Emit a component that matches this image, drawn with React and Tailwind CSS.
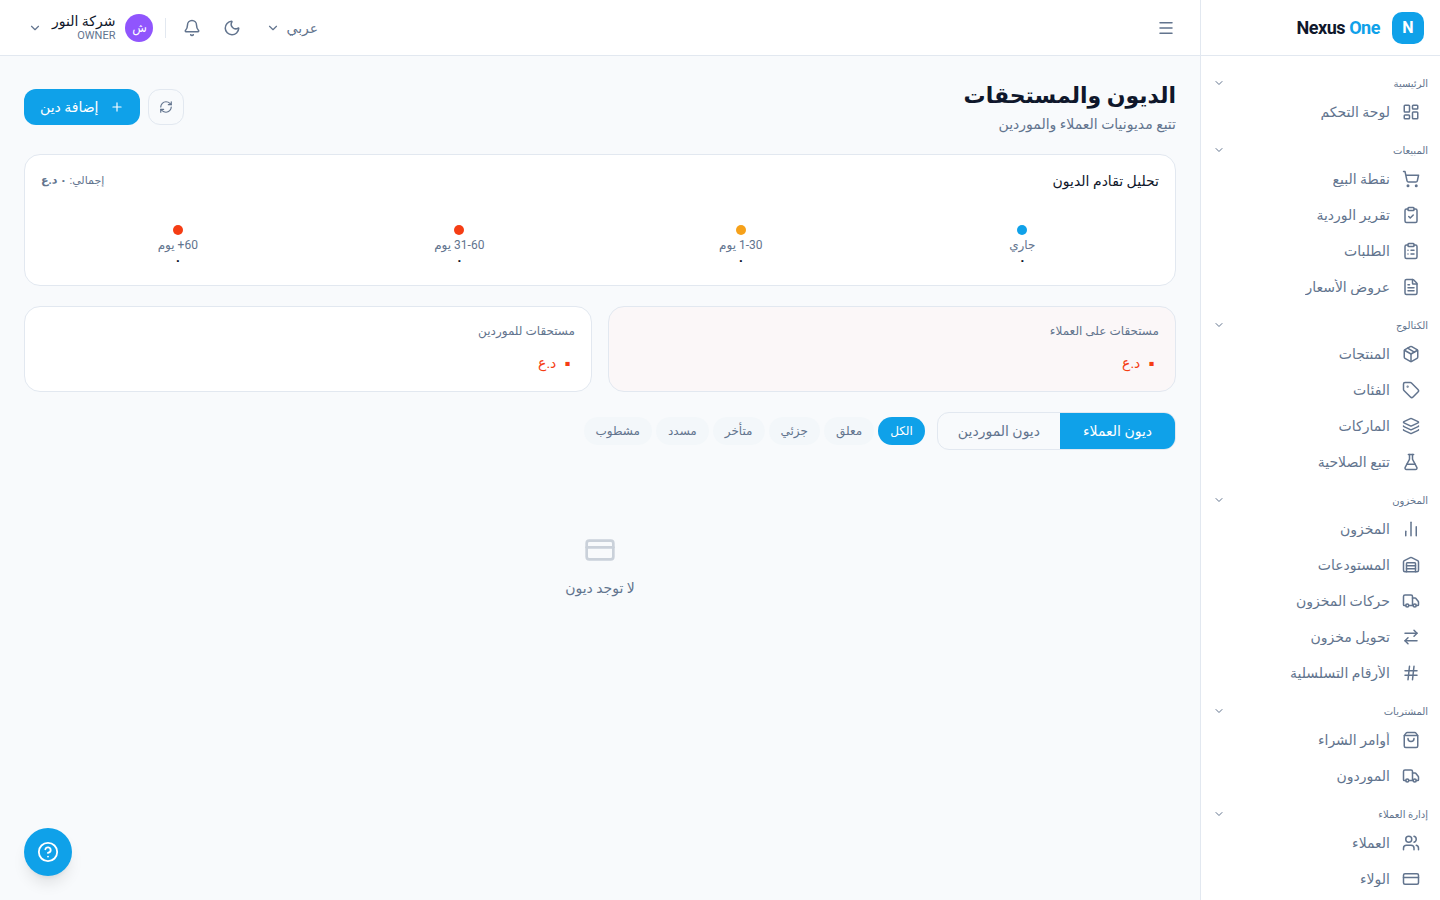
import {
  ArrowRightLeft,
  Bell,
  ChartNoAxesColumn,
  ChevronDown,
  CircleHelp,
  ClipboardCheck,
  ClipboardList,
  CreditCard,
  FileText,
  FlaskConical,
  Hash,
  Layers,
  LayoutDashboard,
  Menu,
  Moon,
  Package,
  Plus,
  RefreshCw,
  ShoppingBag,
  ShoppingCart,
  Tag,
  Truck,
  Users,
  Warehouse,
} from 'lucide-react'
import { useState } from 'react'

const SECTIONS = [
  { title: 'الرئيسية', items: [{ label: 'لوحة التحكم', icon: LayoutDashboard }] },
  {
    title: 'المبيعات',
    items: [
      { label: 'نقطة البيع', icon: ShoppingCart },
      { label: 'تقرير الوردية', icon: ClipboardCheck },
      { label: 'الطلبات', icon: ClipboardList },
      { label: 'عروض الأسعار', icon: FileText },
    ],
  },
  {
    title: 'الكتالوج',
    items: [
      { label: 'المنتجات', icon: Package },
      { label: 'الفئات', icon: Tag },
      { label: 'الماركات', icon: Layers },
      { label: 'تتبع الصلاحية', icon: FlaskConical },
    ],
  },
  {
    title: 'المخزون',
    items: [
      { label: 'المخزون', icon: ChartNoAxesColumn },
      { label: 'المستودعات', icon: Warehouse },
      { label: 'حركات المخزون', icon: Truck },
      { label: 'تحويل مخزون', icon: ArrowRightLeft },
      { label: 'الأرقام التسلسلية', icon: Hash },
    ],
  },
  {
    title: 'المشتريات',
    items: [
      { label: 'أوامر الشراء', icon: ShoppingBag },
      { label: 'الموردون', icon: Truck },
    ],
  },
  {
    title: 'إدارة العملاء',
    items: [
      { label: 'العملاء', icon: Users },
      { label: 'الولاء', icon: CreditCard },
    ],
  },
]

const AGING = [
  { label: 'جاري', dot: 'bg-[#0fa1e9]' },
  { label: '1-30 يوم', dot: 'bg-[#f6a11a]' },
  { label: '31-60 يوم', dot: 'bg-[#f53d14]' },
  { label: '60+ يوم', dot: 'bg-[#f53d14]' },
]

const TABS = ['ديون العملاء', 'ديون الموردين']
const FILTERS = ['الكل', 'معلق', 'جزئي', 'متأخر', 'مسدد', 'مشطوب']

function Sidebar() {
  return (
    <aside className="flex w-60 shrink-0 flex-col border-e border-slate-200 bg-white">
      <div className="flex h-14 shrink-0 items-center gap-3 border-b border-slate-200 px-4">
        <div className="flex size-8 items-center justify-center rounded-[10px] bg-[#0fa1e9] text-base font-bold text-white">
          N
        </div>
        <span dir="ltr" className="text-lg font-bold tracking-tight text-slate-900">
          Nexus <span className="text-[#0fa1e9]">One</span>
        </span>
      </div>

      <nav className="flex-1 overflow-hidden px-3 pt-4">
        {SECTIONS.map((section) => (
          <div key={section.title} className="mb-[9px]">
            <button
              type="button"
              className="flex h-[22px] w-full items-center justify-between text-[10px] text-slate-500"
            >
              {section.title}
              <ChevronDown className="size-3" />
            </button>
            {section.items.map(({ label, icon: Icon }) => (
              <a key={label} href="#" className="flex h-9 items-center gap-3 px-2 text-sm text-slate-500">
                <Icon className="size-[18px] shrink-0" />
                <span className="truncate leading-4">{label}</span>
              </a>
            ))}
          </div>
        ))}
      </nav>
    </aside>
  )
}

function Topbar() {
  return (
    <header className="flex h-14 shrink-0 items-center justify-between border-b border-slate-200 bg-white px-4 text-slate-500">
      <button type="button" aria-label="القائمة" className="flex size-9 items-center justify-center">
        <Menu className="size-[18px]" />
      </button>

      <div className="flex items-center">
        <button type="button" className="flex h-9 items-center gap-1.5 px-3 text-sm">
          عربي
          <ChevronDown className="size-3.5" />
        </button>
        <button type="button" aria-label="الوضع الليلي" className="ms-1 flex size-9 items-center justify-center">
          <Moon className="size-[18px]" />
        </button>
        <button type="button" aria-label="الإشعارات" className="ms-1 flex size-9 items-center justify-center">
          <Bell className="size-[18px]" />
        </button>
        <div className="mx-2 h-5 w-px bg-slate-200" />
        <button type="button" className="flex items-center gap-2.5 ps-1 pe-3">
          <span className="flex size-7 items-center justify-center rounded-full bg-[#9055fd] text-xs text-white">
            ش
          </span>
          <span className="flex flex-col items-start">
            <span className="text-sm leading-4 font-medium text-slate-900">شركة النور</span>
            <span className="text-[11px] leading-[14px]">OWNER</span>
          </span>
          <ChevronDown className="size-3.5" />
        </button>
      </div>
    </header>
  )
}

function AgingCard() {
  return (
    <section className="flex h-[132px] flex-col rounded-2xl border border-slate-200 bg-white px-4 pt-4">
      <div className="flex h-5 items-center justify-between">
        <h2 className="text-sm font-medium text-slate-900">تحليل تقادم الديون</h2>
        <p className="text-[11px] text-slate-500">
          إجمالي: <strong>٠ د.ع</strong>
        </p>
      </div>
      <div className="mt-[34px] grid grid-cols-4 gap-2">
        {AGING.map(({ label, dot }) => (
          <div key={label} className="flex flex-col items-center">
            <span className={`size-2.5 rounded-full ${dot}`} />
            <span className="mt-0.5 text-xs leading-4 text-slate-500">{label}</span>
            <span className="text-[11px] leading-4 font-bold text-slate-900">٠</span>
          </div>
        ))}
      </div>
    </section>
  )
}

function BalanceCard({ label, highlighted }) {
  return (
    <div
      className={`flex flex-col gap-3 rounded-2xl border border-slate-200 px-4 py-4 ${
        highlighted ? 'bg-[#fbf7f8]' : 'bg-white'
      }`}
    >
      <p className="text-xs leading-4 text-slate-500">{label}</p>
      <p className="flex h-6 items-center gap-1 text-sm text-[#f53d14]">
        <span className="text-2xl leading-6 font-bold">٠</span>
        <span>د.ع</span>
      </p>
    </div>
  )
}

export default function App() {
  const [tab, setTab] = useState(TABS[0])
  const [filter, setFilter] = useState(FILTERS[0])

  return (
    <div
      dir="rtl"
      className="flex h-screen overflow-hidden bg-slate-50 font-[Roboto,'DejaVu_Sans',sans-serif]"
    >
      <Sidebar />

      <div className="flex min-w-0 flex-1 flex-col">
        <Topbar />

        <main className="flex-1 overflow-hidden p-6">
          <div className="mb-5 flex items-center justify-between">
            <div>
              <h1 className="text-[22px] leading-8 font-bold text-slate-900">الديون والمستحقات</h1>
              <p className="mt-0.5 text-sm leading-5 text-slate-500">تتبع مديونيات العملاء والموردين</p>
            </div>
            <div className="flex gap-2">
              <button
                type="button"
                aria-label="تحديث"
                className="flex size-9 items-center justify-center rounded-xl border border-slate-200 text-slate-500"
              >
                <RefreshCw className="size-3.5" />
              </button>
              <button
                type="button"
                className="flex h-9 min-w-[116px] items-center justify-between rounded-xl bg-[#0fa1e9] px-4 text-sm text-white"
              >
                <Plus className="size-3.5" />
                إضافة دين
              </button>
            </div>
          </div>

          <AgingCard />

          <div className="my-5 grid grid-cols-2 gap-4">
            <BalanceCard label="مستحقات على العملاء" highlighted />
            <BalanceCard label="مستحقات للموردين" />
          </div>

          <div className="flex items-center gap-3">
            <div className="flex overflow-hidden rounded-xl border border-slate-200">
              {TABS.map((t) => (
                <button
                  key={t}
                  type="button"
                  onClick={() => setTab(t)}
                  className={`h-9 min-w-[115px] px-5 text-sm ${
                    tab === t ? 'bg-[#0fa1e9] text-white' : 'text-slate-500'
                  }`}
                >
                  {t}
                </button>
              ))}
            </div>
            <div className="flex gap-1">
              {FILTERS.map((f) => (
                <button
                  key={f}
                  type="button"
                  onClick={() => setFilter(f)}
                  className={`h-7 rounded-full px-3 text-xs ${
                    filter === f ? 'bg-[#0fa1e9] text-white' : 'bg-[#f3f7fa] text-slate-500'
                  }`}
                >
                  {f}
                </button>
              ))}
            </div>
          </div>

          {/* Empty state */}
          <div className="flex flex-col items-center pt-[84px] text-slate-500">
            <CreditCard className="size-8 opacity-30" />
            <p className="mt-3 text-sm leading-5">لا توجد ديون</p>
          </div>
        </main>
      </div>

      <button
        type="button"
        aria-label="المساعدة"
        className="fixed bottom-6 left-6 flex size-12 items-center justify-center rounded-full bg-[#0fa1e9] text-white shadow-lg"
      >
        <CircleHelp className="size-[22px]" />
      </button>
    </div>
  )
}
